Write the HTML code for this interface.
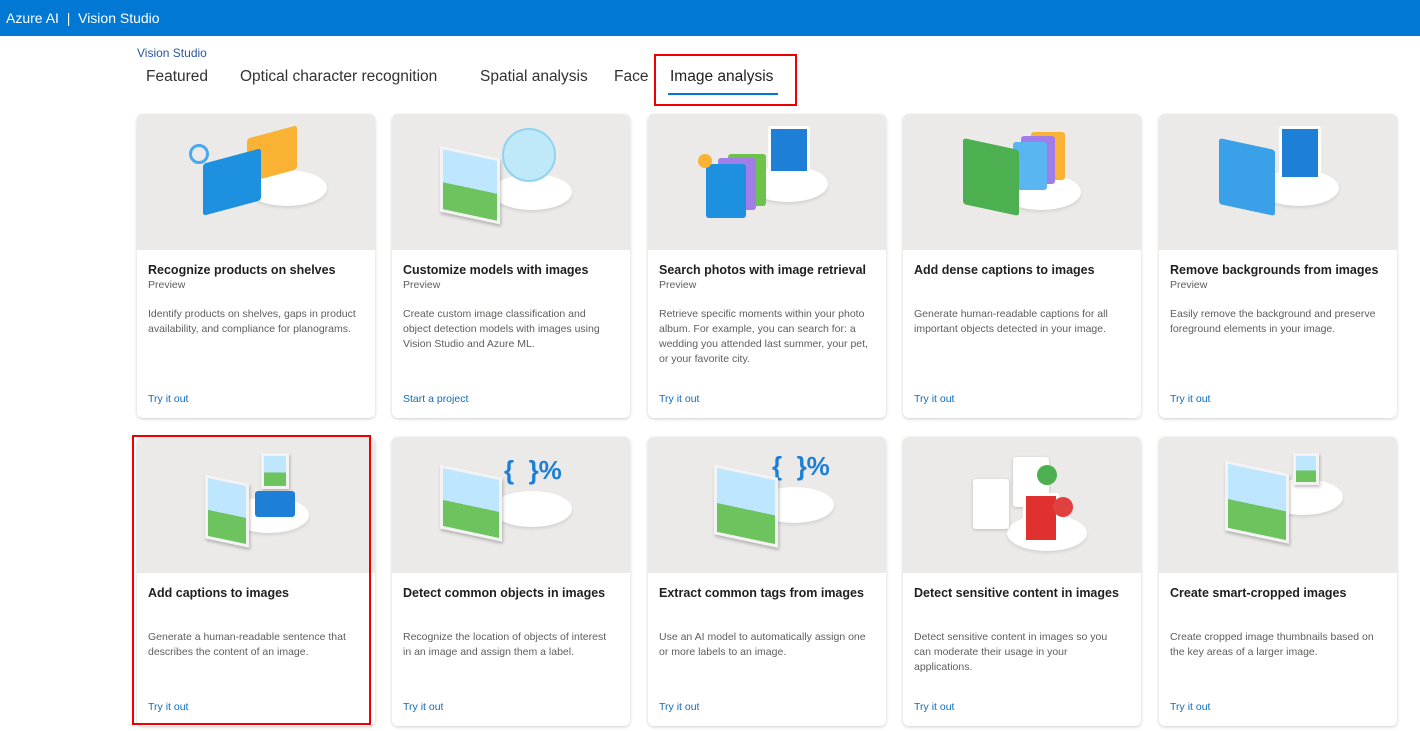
<!DOCTYPE html>
<html><head><meta charset="utf-8"><style>
*{box-sizing:border-box;margin:0;padding:0}
body{width:1420px;height:731px;overflow:hidden;background:#fff;font-family:"Segoe UI","Liberation Sans",sans-serif;color:#201f1e;position:relative}
.top{position:absolute;left:0;top:0;width:1420px;height:36px;background:#0078d4;color:#fff;font-size:14px;line-height:36px;padding-left:6px}
.bc{position:absolute;left:137px;top:46px;font-size:12px;color:#2b579a}
.tab{position:absolute;top:68px;font-size:15.5px;color:#323130}
.ul{position:absolute;left:668px;top:93px;width:110px;height:2px;background:#0078d4}
.red{position:absolute;border:2px solid #e00;}
.card{position:absolute;width:238px;background:#fff;border-radius:6px;box-shadow:0 1px 3px rgba(0,0,0,.2);overflow:hidden}
.img{height:136px;background:#ebeae8;position:relative}
.t{position:absolute;left:11px;font-size:12.5px;font-weight:600;color:#201f1e}
.p{position:absolute;left:11px;font-size:10.5px;color:#605e5c}
.d{position:absolute;left:11px;right:14px;font-size:10.5px;line-height:15px;color:#605e5c}
.l{position:absolute;left:11px;font-size:10.5px;color:#0f6cbd}
.plat{position:absolute;width:80px;height:36px;border-radius:50%;background:#fff;box-shadow:0 2px 3px rgba(0,0,0,.1)}
.pic{position:absolute;border:3px solid #f3f3f3;box-shadow:1px 2px 3px rgba(0,0,0,.25);background:linear-gradient(#bfe6ff 55%,#6dc35e 55%)}
.sq{position:absolute;border-radius:3px}
</style></head><body>
<div class="top">Azure AI &nbsp;|&nbsp; Vision Studio</div>
<div class="bc">Vision Studio</div>
<div class="tab" style="left:146px">Featured</div>
<div class="tab" style="left:240px">Optical character recognition</div>
<div class="tab" style="left:480px">Spatial analysis</div>
<div class="tab" style="left:614px">Face</div>
<div class="tab" style="left:670px;color:#201f1e">Image analysis</div>
<div class="ul"></div>
<div class="red" style="left:654px;top:54px;width:143px;height:52px"></div>

<!-- row 1 -->
<div class="card" style="left:137px;top:114px;height:304px"><div class="img">
<div class="plat" style="left:110px;top:56px"></div>
<div class="sq" style="left:110px;top:18px;width:50px;height:44px;background:#f9b233;transform:skewY(-15deg)"></div>
<div class="sq" style="left:66px;top:42px;width:58px;height:52px;background:#1e90e0;transform:skewY(-15deg)"></div>
<div style="position:absolute;left:52px;top:30px;width:20px;height:20px;border:3px solid #4aa8f0;border-radius:50%"></div>
</div><div class="t" style="top:149px">Recognize products on shelves</div><div class="p" style="top:165px">Preview</div><div class="d" style="top:193px">Identify products on shelves, gaps in product availability, and compliance for planograms.</div><div class="l" style="top:279px">Try it out</div></div>

<div class="card" style="left:392px;top:114px;height:304px"><div class="img">
<div class="plat" style="left:100px;top:60px"></div>
<div style="position:absolute;left:110px;top:14px;width:54px;height:54px;border-radius:50%;background:#bfe8f8;border:2px solid #8fd3f0"></div>
<div class="pic" style="left:48px;top:38px;width:60px;height:66px;transform:skewY(12deg)"></div>
</div><div class="t" style="top:149px">Customize models with images</div><div class="p" style="top:165px">Preview</div><div class="d" style="top:193px">Create custom image classification and object detection models with images using Vision Studio and Azure ML.</div><div class="l" style="top:279px">Start a project</div></div>

<div class="card" style="left:648px;top:114px;height:304px"><div class="img">
<div class="plat" style="left:100px;top:52px"></div>
<div class="sq" style="left:120px;top:12px;width:42px;height:48px;background:#1e7fd6;border:3px solid #fff"></div>
<div class="sq" style="left:80px;top:40px;width:38px;height:52px;background:#6cc24a"></div>
<div class="sq" style="left:70px;top:44px;width:38px;height:52px;background:#a07de8"></div>
<div class="sq" style="left:58px;top:50px;width:40px;height:54px;background:#1e90e0"></div>
<div style="position:absolute;left:50px;top:40px;width:14px;height:14px;border-radius:50%;background:#f9b233"></div>
</div><div class="t" style="top:149px">Search photos with image retrieval</div><div class="p" style="top:165px">Preview</div><div class="d" style="top:193px">Retrieve specific moments within your photo album. For example, you can search for: a wedding you attended last summer, your pet, or your favorite city.</div><div class="l" style="top:279px">Try it out</div></div>

<div class="card" style="left:903px;top:114px;height:304px"><div class="img">
<div class="plat" style="left:98px;top:60px"></div>
<div class="sq" style="left:128px;top:18px;width:34px;height:48px;background:#f9b233"></div>
<div class="sq" style="left:118px;top:22px;width:34px;height:48px;background:#a07de8"></div>
<div class="sq" style="left:110px;top:28px;width:34px;height:48px;background:#5ab6f0"></div>
<div class="sq" style="left:60px;top:30px;width:56px;height:66px;background:#4caf50;transform:skewY(12deg)"></div>
</div><div class="t" style="top:149px">Add dense captions to images</div><div class="d" style="top:193px">Generate human-readable captions for all important objects detected in your image.</div><div class="l" style="top:279px">Try it out</div></div>

<div class="card" style="left:1159px;top:114px;height:304px"><div class="img">
<div class="plat" style="left:100px;top:56px"></div>
<div class="sq" style="left:120px;top:12px;width:42px;height:54px;background:#1e7fd6;border:3px solid #fff"></div>
<div class="sq" style="left:60px;top:30px;width:56px;height:66px;background:#3aa0e8;transform:skewY(12deg)"></div>
</div><div class="t" style="top:149px">Remove backgrounds from images</div><div class="p" style="top:165px">Preview</div><div class="d" style="top:193px">Easily remove the background and preserve foreground elements in your image.</div><div class="l" style="top:279px">Try it out</div></div>

<!-- row 2 -->
<div class="card" style="left:137px;top:437px;height:289px"><div class="img">
<div class="plat" style="left:92px;top:60px"></div>
<div class="pic" style="left:124px;top:16px;width:28px;height:36px"></div>
<div class="sq" style="left:118px;top:54px;width:40px;height:26px;background:#1e7fd6"></div>
<div class="pic" style="left:68px;top:42px;width:44px;height:64px;transform:skewY(12deg)"></div>
</div><div class="t" style="top:149px">Add captions to images</div><div class="d" style="top:193px">Generate a human-readable sentence that describes the content of an image.</div><div class="l" style="top:264px">Try it out</div></div>

<div class="card" style="left:392px;top:437px;height:289px"><div class="img">
<div class="plat" style="left:100px;top:54px"></div>
<div style="position:absolute;left:112px;top:18px;color:#1e7fd6;font-size:26px;font-weight:bold">{&nbsp;&nbsp;}%</div>
<div class="pic" style="left:48px;top:34px;width:62px;height:64px;transform:skewY(12deg)"></div>
</div><div class="t" style="top:149px">Detect common objects in images</div><div class="d" style="top:193px">Recognize the location of objects of interest in an image and assign them a label.</div><div class="l" style="top:264px">Try it out</div></div>

<div class="card" style="left:648px;top:437px;height:289px"><div class="img">
<div class="plat" style="left:106px;top:50px"></div>
<div style="position:absolute;left:124px;top:14px;color:#1e7fd6;font-size:26px;font-weight:bold">{&nbsp;&nbsp;}%</div>
<div class="pic" style="left:66px;top:34px;width:64px;height:70px;transform:skewY(12deg)"></div>
</div><div class="t" style="top:149px">Extract common tags from images</div><div class="d" style="top:193px">Use an AI model to automatically assign one or more labels to an image.</div><div class="l" style="top:264px">Try it out</div></div>

<div class="card" style="left:903px;top:437px;height:289px"><div class="img">
<div class="plat" style="left:104px;top:78px"></div>
<div class="sq" style="left:110px;top:20px;width:36px;height:50px;background:#fff;box-shadow:0 1px 3px rgba(0,0,0,.2)"></div>
<div class="sq" style="left:70px;top:42px;width:36px;height:50px;background:#fff;box-shadow:0 1px 3px rgba(0,0,0,.2)"></div>
<div class="sq" style="left:120px;top:56px;width:36px;height:50px;background:#e03030;border:3px solid #fff"></div>
<div style="position:absolute;left:134px;top:28px;width:20px;height:20px;border-radius:50%;background:#4caf50"></div>
<div style="position:absolute;left:150px;top:60px;width:20px;height:20px;border-radius:50%;background:#e04040"></div>
</div><div class="t" style="top:149px">Detect sensitive content in images</div><div class="d" style="top:193px">Detect sensitive content in images so you can moderate their usage in your applications.</div><div class="l" style="top:264px">Try it out</div></div>

<div class="card" style="left:1159px;top:437px;height:289px"><div class="img">
<div class="plat" style="left:104px;top:42px"></div>
<div class="pic" style="left:134px;top:16px;width:26px;height:32px"></div>
<div class="pic" style="left:66px;top:30px;width:64px;height:70px;transform:skewY(12deg)"></div>
</div><div class="t" style="top:149px">Create smart-cropped images</div><div class="d" style="top:193px">Create cropped image thumbnails based on the key areas of a larger image.</div><div class="l" style="top:264px">Try it out</div></div>

<div class="red" style="left:132px;top:435px;width:239px;height:290px"></div>
</body></html>
